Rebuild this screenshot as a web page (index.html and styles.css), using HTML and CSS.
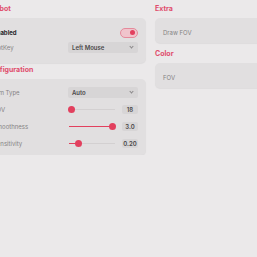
FILE: index.html
```html
<!DOCTYPE html>
<html lang="en">
<head>
    <meta charset="UTF-8">
    <meta name="viewport" content="width=device-width, initial-scale=1.0">
    <title>Settings</title>
    <link rel="stylesheet" href="styles.css">
</head>
<body>
    <div class="page">
        <div class="column">
            <h2 class="section-title">Aimbot</h2>
            <div class="card">
                <div class="row">
                    <span class="label strong">Enabled</span>
                    <div class="control end">
                        <div class="toggle on"><span class="knob"></span></div>
                    </div>
                </div>
                <div class="row">
                    <span class="label">HotKey</span>
                    <div class="control">
                        <div class="select">Left Mouse <span class="chevron"></span></div>
                    </div>
                </div>
            </div>

            <h2 class="section-title">Configuration</h2>
            <div class="card tall">
                <div class="row">
                    <span class="label">Aim Type</span>
                    <div class="control">
                        <div class="select">Auto <span class="chevron"></span></div>
                    </div>
                </div>
                <div class="row">
                    <span class="label">FOV</span>
                    <div class="control">
                        <div class="slider">
                            <div class="fill" style="width: 4%"></div>
                            <div class="thumb" style="left: 4%"></div>
                        </div>
                        <div class="value">18</div>
                    </div>
                </div>
                <div class="row">
                    <span class="label">Smoothness</span>
                    <div class="control">
                        <div class="slider">
                            <div class="fill" style="width: 93%"></div>
                            <div class="thumb" style="left: 93%"></div>
                        </div>
                        <div class="value">3.0</div>
                    </div>
                </div>
                <div class="row">
                    <span class="label">Sensitivity</span>
                    <div class="control">
                        <div class="slider">
                            <div class="fill" style="width: 20%"></div>
                            <div class="thumb" style="left: 20%"></div>
                        </div>
                        <div class="value">0.20</div>
                    </div>
                </div>
            </div>
        </div>

        <div class="column">
            <h2 class="section-title">Extra</h2>
            <div class="card flat">
                <span class="label">Draw FOV</span>
            </div>

            <h2 class="section-title spaced">Color</h2>
            <div class="card flat">
                <span class="label">FOV</span>
            </div>
        </div>
    </div>
</body>
</html>
```

FILE: styles.css
```css
:root {
    --accent: #e2405e;
    --title: #e04c6c;
    --bg: #ebe9ea;
    --card: #e1dfe0;
    --field: #d7d5d6;
}

body {
    margin: 0;
    background: var(--bg);
    font-family: Inter, "Noto Sans", sans-serif;
    font-size: 6px;
    color: #858384;
    overflow: hidden;
}

.page {
    display: grid;
    grid-template-columns: 160px 160px;
    column-gap: 9px;
    margin-left: -14px;
    padding-top: 4px;
}

.column {
    display: flex;
    flex-direction: column;
}

.section-title {
    margin: 0 0 4px;
    font-size: 7px;
    line-height: 10px;
    font-weight: 700;
    color: var(--title);
}

.card + .section-title {
    margin-top: 2px;
}

.card + .section-title.spaced {
    margin-top: 6px;
}

.card {
    background: var(--card);
    border-radius: 5px;
    padding: 7px 8px 8px 7px;
    box-shadow: 0 1px 1px rgba(0,0,0,0.06);
}

.card.tall {
    padding: 5px 8px 3px 7px;
}

.card.flat {
    height: 25px;
    padding: 3px 8px 0;
    display: flex;
    align-items: center;
    box-sizing: border-box;
}

.row {
    display: grid;
    grid-template-columns: 75px 1fr;
    align-items: center;
    height: 15px;
}

.card.tall .row {
    height: 17px;
}

.label {
    white-space: nowrap;
}

.label.strong {
    color: #2a2829;
    font-weight: 700;
}

.control {
    display: flex;
    align-items: center;
    gap: 7px;
}

.control.end {
    justify-content: flex-end;
}

.toggle {
    width: 18px;
    height: 10px;
    box-sizing: border-box;
    border-radius: 5px;
    border: 1px solid #e58a9b;
    background: #f0c4cc;
    display: flex;
    align-items: center;
    justify-content: flex-end;
    padding: 0 2px;
}

.knob {
    width: 5px;
    height: 5px;
    border-radius: 50%;
    background: var(--accent);
}

.select {
    flex: 1;
    height: 11px;
    background: var(--field);
    border-radius: 2px;
    display: flex;
    align-items: center;
    justify-content: space-between;
    padding: 0 5px 0 4px;
    font-weight: 600;
    color: #4a4849;
}

.chevron {
    width: 2px;
    height: 2px;
    border-right: 1px solid #8a8889;
    border-bottom: 1px solid #8a8889;
    transform: rotate(45deg);
    margin-top: -2px;
}

.slider {
    position: relative;
    flex: 1;
    height: 1px;
    background: #d3d0d1;
    margin-left: 1px;
}

.fill {
    height: 100%;
    background: var(--accent);
}

.thumb {
    position: absolute;
    top: -3px;
    width: 7px;
    height: 7px;
    margin-left: -3px;
    border-radius: 50%;
    background: var(--accent);
}

.value {
    width: 16px;
    height: 9px;
    background: var(--field);
    border-radius: 2px;
    display: flex;
    align-items: center;
    justify-content: center;
    font-weight: 600;
    color: #4a4849;
}
```
